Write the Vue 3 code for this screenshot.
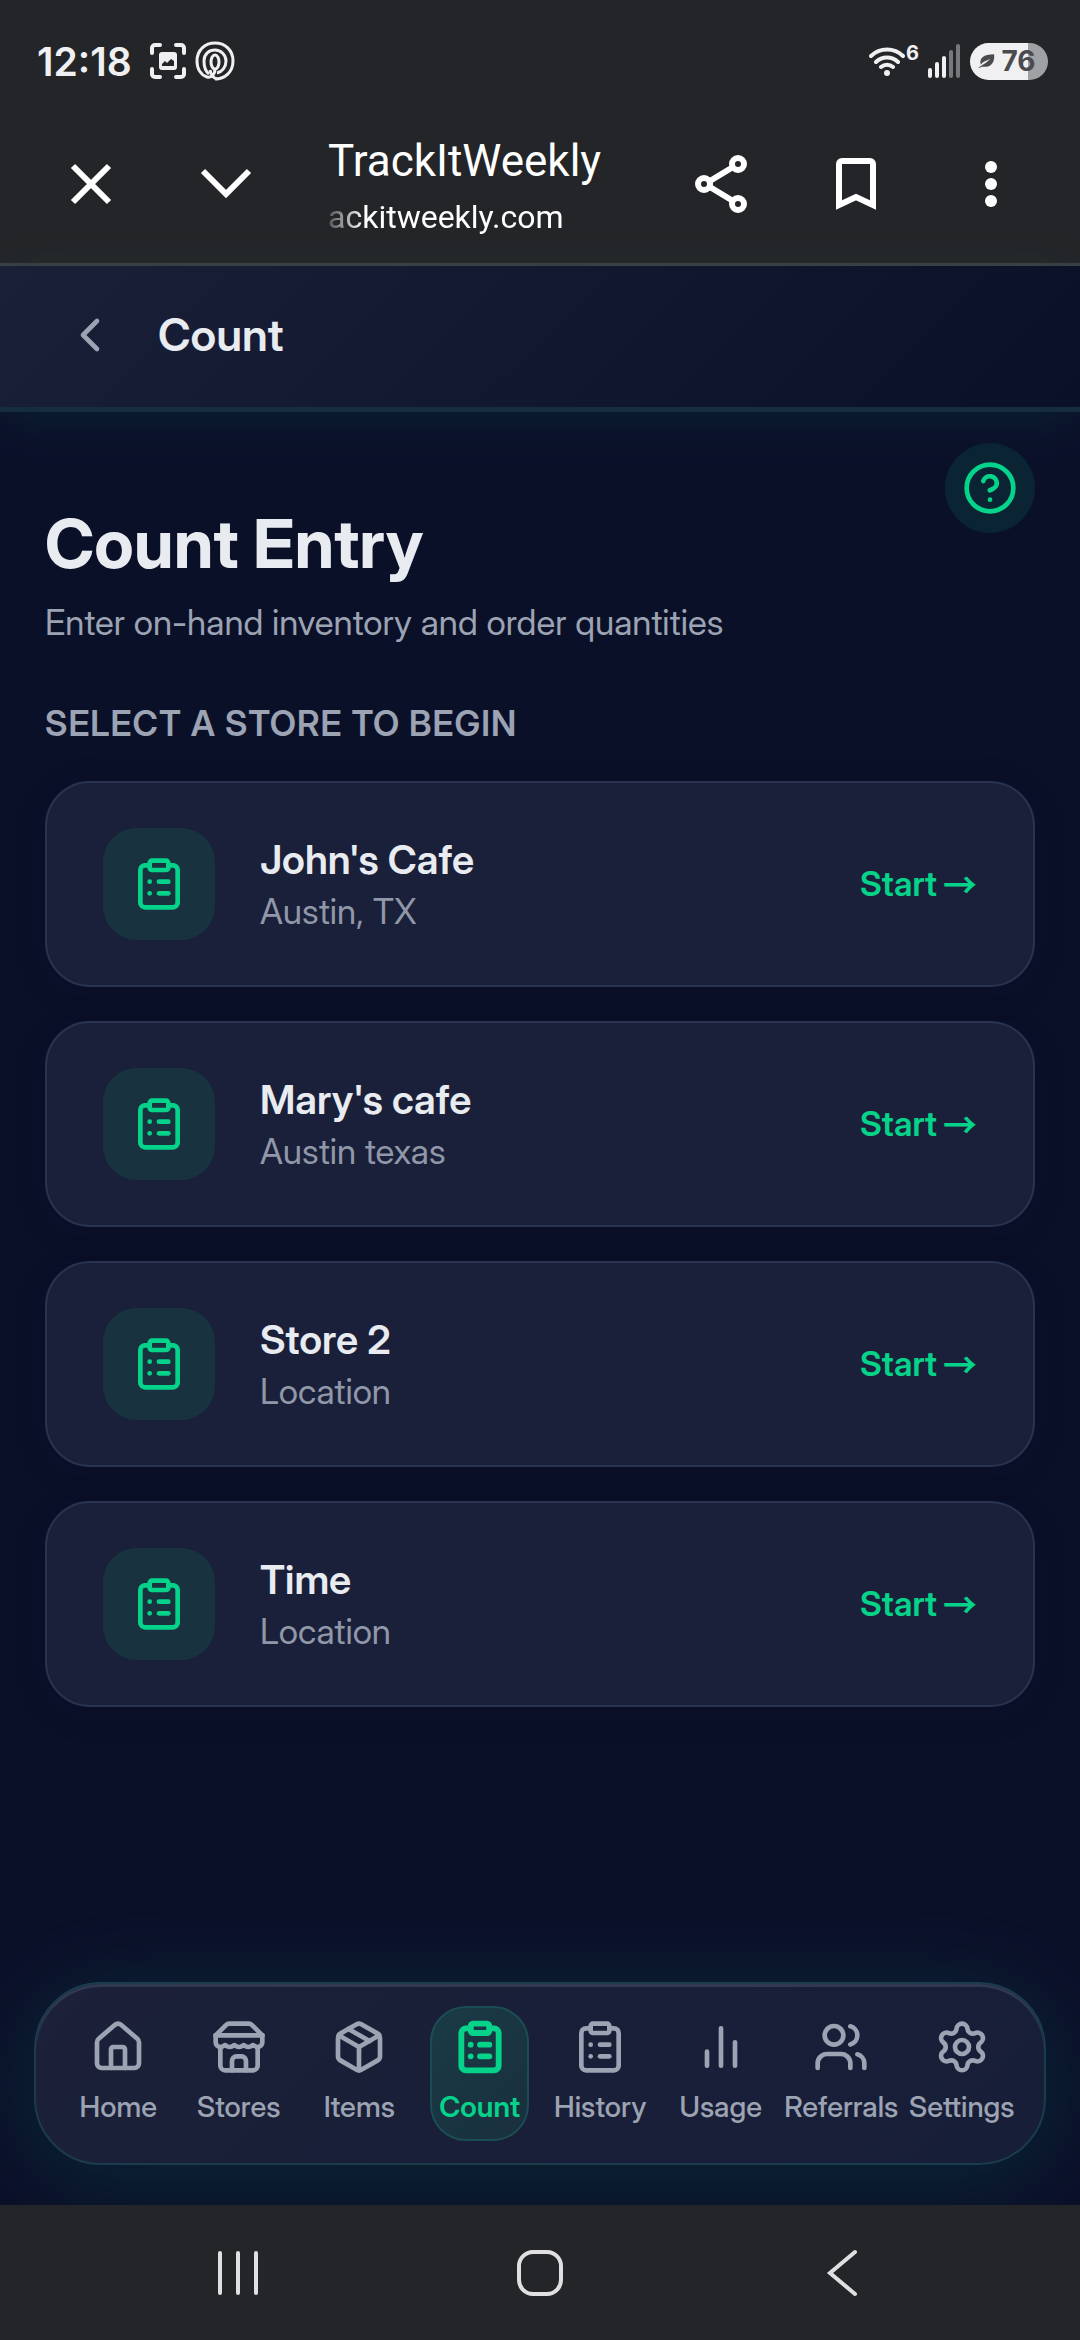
<script setup>
import { ref } from 'vue'

const stores = [
  { name: "John's Cafe", place: 'Austin, TX' },
  { name: "Mary's cafe", place: 'Austin texas' },
  { name: 'Store 2', place: 'Location' },
  { name: 'Time', place: 'Location' },
]

const clipboard = [
  'M9 2h6a1 1 0 0 1 1 1v2a1 1 0 0 1-1 1H9a1 1 0 0 1-1-1V3a1 1 0 0 1 1-1z',
  'M16 4h2a2 2 0 0 1 2 2v14a2 2 0 0 1-2 2H6a2 2 0 0 1-2-2V6a2 2 0 0 1 2-2h2',
  'M12 11h4',
  'M12 16h4',
  'M8 11h.01',
  'M8 16h.01',
]

const tabs = [
  {
    label: 'Home',
    paths: [
      'M15 21v-8a1 1 0 0 0-1-1h-4a1 1 0 0 0-1 1v8',
      'M3 10a2 2 0 0 1 .709-1.528l7-5.999a2 2 0 0 1 2.582 0l7 5.999A2 2 0 0 1 21 10v9a2 2 0 0 1-2 2H5a2 2 0 0 1-2-2z',
    ],
  },
  {
    label: 'Stores',
    paths: [
      'm2 7 4.41-4.41A2 2 0 0 1 7.83 2h8.34a2 2 0 0 1 1.42.59L22 7',
      'M4 12v8a2 2 0 0 0 2 2h12a2 2 0 0 0 2-2v-8',
      'M15 22v-4a2 2 0 0 0-2-2h-2a2 2 0 0 0-2 2v4',
      'M2 7h20',
      'M22 7v3a2 2 0 0 1-2 2a2.7 2.7 0 0 1-1.59-.63.7.7 0 0 0-.82 0A2.7 2.7 0 0 1 16 12a2.7 2.7 0 0 1-1.59-.63.7.7 0 0 0-.82 0A2.7 2.7 0 0 1 12 12a2.7 2.7 0 0 1-1.59-.63.7.7 0 0 0-.82 0A2.7 2.7 0 0 1 8 12a2.7 2.7 0 0 1-1.59-.63.7.7 0 0 0-.82 0A2.7 2.7 0 0 1 4 12a2 2 0 0 1-2-2V7',
    ],
  },
  {
    label: 'Items',
    paths: [
      'M11 21.73a2 2 0 0 0 2 0l7-4A2 2 0 0 0 21 16V8a2 2 0 0 0-1-1.73l-7-4a2 2 0 0 0-2 0l-7 4A2 2 0 0 0 3 8v8a2 2 0 0 0 1 1.73z',
      'M12 22V12',
      'm3.3 7 8.7 5 8.7-5',
      'm7.5 4.27 9 5.15',
    ],
  },
  { label: 'Count', paths: clipboard },
  { label: 'History', paths: clipboard },
  { label: 'Usage', paths: ['M18 20V10', 'M12 20V4', 'M6 20v-6'] },
  {
    label: 'Referrals',
    paths: [
      'M16 21v-2a4 4 0 0 0-4-4H6a4 4 0 0 0-4 4v2',
      'M13 7a4 4 0 1 1-8 0 4 4 0 0 1 8 0z',
      'M22 21v-2a4 4 0 0 0-3-3.87',
      'M16 3.13a4 4 0 0 1 0 7.75',
    ],
  },
  {
    label: 'Settings',
    paths: [
      'M9.671 4.136a2.34 2.34 0 0 1 4.659 0 2.34 2.34 0 0 0 3.319 1.915 2.34 2.34 0 0 1 2.33 4.033 2.34 2.34 0 0 0 0 3.831 2.34 2.34 0 0 1-2.33 4.033 2.34 2.34 0 0 0-3.319 1.915 2.34 2.34 0 0 1-4.659 0 2.34 2.34 0 0 0-3.32-1.915 2.34 2.34 0 0 1-2.33-4.033 2.34 2.34 0 0 0 0-3.831A2.34 2.34 0 0 1 6.35 6.051a2.34 2.34 0 0 0 3.319-1.915',
      'M15 12a3 3 0 1 1-6 0 3 3 0 0 1 6 0z',
    ],
  },
]

const active = ref('Count')
</script>

<template>
  <div class="screen">
    <div class="status">
      <div class="status-side">
        <time class="clock">12:18</time>
        <svg class="capture" viewBox="0 0 36 36" aria-hidden="true">
          <path class="line" d="M2 10V5a3 3 0 0 1 3-3h5M26 2h5a3 3 0 0 1 3 3v5M34 26v5a3 3 0 0 1-3 3h-5M10 34H5a3 3 0 0 1-3-3v-5" />
          <path class="solid" fill-rule="evenodd" d="M12 9h12a3 3 0 0 1 3 3v12a3 3 0 0 1-3 3H12a3 3 0 0 1-3-3V12a3 3 0 0 1 3-3zM12 23h12v-5l-3-2-4 4-2-2-3 3z" />
        </svg>
        <svg class="finger" viewBox="0 0 40 40" aria-hidden="true">
          <path d="M20 38c10 0 18-7 18-18S30 2 20 2 2 9 2 20c0 8 4 14 10 16 5 1 8-3 8-8" />
          <path d="M14 33c-4-3-5-8-5-13C9 13 14 9 20 9s11 5 11 11-4 11-9 12" />
          <ellipse cx="20" cy="21" rx="4" ry="7" />
          <path d="M15 29c1 5 3 8 7 9" />
        </svg>
      </div>
      <div class="status-side">
        <svg class="wifi" viewBox="0 0 36 32" aria-hidden="true">
          <path d="M2 11a23 23 0 0 1 32 0M7 17a16 16 0 0 1 22 0M12 22a9 9 0 0 1 12 0" />
          <circle cx="18" cy="28" r="3" />
        </svg>
        <span class="wifi-gen">6</span>
        <svg class="signal" viewBox="0 0 34 34" aria-hidden="true">
          <path d="M3 26v6M10 20v12M17 14v18" />
          <path class="dim" d="M24 8v24M31 2v30" />
        </svg>
        <div class="battery">
          <svg viewBox="0 0 20 16" aria-hidden="true">
            <path d="M1 15c3-1 4-3 8-5l5-4C9 8 6 9 4 12 2 5 7 1 18 1c1 8-3 14-10 13H5c-1 1-2 1-4 1z" />
          </svg>
          <span>76</span>
        </div>
      </div>
    </div>

    <div class="toolbar">
      <button class="tool" type="button" aria-label="Close">
        <svg viewBox="0 0 68 68"><path d="M16 16l36 36M52 16L16 52" /></svg>
      </button>
      <button class="tool" type="button" aria-label="Minimise">
        <svg viewBox="0 0 68 68"><path d="M11 21l23 23 23-23" /></svg>
      </button>
      <div class="site">
        <span class="site-name">TrackItWeekly</span>
        <span class="site-url">ackitweekly.com</span>
      </div>
      <button class="tool" type="button" aria-label="Share">
        <svg viewBox="0 0 68 68">
          <path d="M18 34l33-20M18 34l33 20" />
          <circle class="knot" cx="17" cy="34" r="6" />
          <circle class="knot" cx="51" cy="14" r="6" />
          <circle class="knot" cx="51" cy="54" r="6" />
        </svg>
      </button>
      <button class="tool" type="button" aria-label="Bookmark">
        <svg viewBox="0 0 68 68"><path d="M17 55V14a3 3 0 0 1 3-3h28a3 3 0 0 1 3 3v41l-17-8z" /></svg>
      </button>
      <button class="tool" type="button" aria-label="More">
        <svg viewBox="0 0 68 68">
          <circle class="dot" cx="34" cy="17" r="6" />
          <circle class="dot" cx="34" cy="34" r="6" />
          <circle class="dot" cx="34" cy="51" r="6" />
        </svg>
      </button>
    </div>

    <header class="head">
      <button class="back" type="button" aria-label="Back">
        <svg class="icon" viewBox="0 0 24 24"><path d="m15 18-6-6 6-6" /></svg>
      </button>
      <span class="head-title">Count</span>
    </header>

    <main class="main">
      <div class="hero">
        <div class="hero-text">
          <h1>Count Entry</h1>
          <p>Enter on-hand inventory and order quantities</p>
        </div>
        <button class="help" type="button" aria-label="Help">
          <svg class="icon" viewBox="0 0 24 24">
            <circle cx="12" cy="12" r="10" />
            <path d="M9.09 9a3 3 0 0 1 5.83 1c0 2-3 3-3 3M12 17h.01" />
          </svg>
        </button>
      </div>

      <h2>Select a store to begin</h2>
      <div class="stores">
        <button v-for="store in stores" :key="store.name" class="card" type="button">
          <span class="tile">
            <svg class="icon" viewBox="0 0 24 24" aria-hidden="true">
              <path v-for="d in clipboard" :key="d" :d="d" />
            </svg>
          </span>
          <span class="info">
            <span class="name">{{ store.name }}</span>
            <span class="place">{{ store.place }}</span>
          </span>
          <span class="start">Start <span class="arrow">→</span></span>
        </button>
      </div>
    </main>

    <nav class="tabs">
      <a
        v-for="tab in tabs"
        :key="tab.label"
        class="tab"
        :class="{ active: tab.label === active }"
        href="#"
        @click.prevent="active = tab.label"
      >
        <span class="pill">
          <svg class="icon" viewBox="0 0 24 24" aria-hidden="true">
            <path v-for="d in tab.paths" :key="d" :d="d" />
          </svg>
          <span class="tab-label">{{ tab.label }}</span>
        </span>
      </a>
    </nav>

    <div class="system">
      <button type="button" aria-label="Recent apps">
        <svg viewBox="0 0 48 48"><path d="M6 4v40M24 4v40M42 4v40" /></svg>
      </button>
      <button type="button" aria-label="Home screen">
        <svg viewBox="0 0 48 48"><rect x="3" y="3" width="42" height="42" rx="14" /></svg>
      </button>
      <button type="button" aria-label="Go back">
        <svg viewBox="0 0 48 48"><path d="M37 3L12 24l25 21" /></svg>
      </button>
    </div>
  </div>
</template>

<style>
body {
  margin: 0;
  background: #0b1029;
}
</style>

<style scoped>
.screen {
  display: flex;
  flex-direction: column;
  min-height: 100vh;
  background: #0b1029;
  color: #e8ebf0;
  font-family: "Inter Display", Inter, "Noto Sans", sans-serif;
}

button {
  margin: 0;
  padding: 0;
  border: 0;
  background: none;
  color: inherit;
  font: inherit;
  text-align: left;
}

svg {
  display: block;
  flex: none;
  fill: none;
  stroke: currentColor;
}

.icon {
  width: 56px;
  height: 56px;
  stroke-width: 2;
  stroke-linecap: round;
  stroke-linejoin: round;
}

/* Device status bar */
.status {
  display: flex;
  justify-content: space-between;
  align-items: center;
  height: 88px;
  padding: 17px 32px 0 37px;
  background: #242528;
  color: #f0f0f2;
  font-family: Inter, sans-serif;
}

.status-side {
  display: flex;
  align-items: center;
}

.clock {
  margin-right: 18px;
  font-size: 39px;
  font-weight: 600;
}

.capture {
  width: 36px;
  height: 36px;
  margin-right: 9px;
  stroke-width: 4;
  stroke-linecap: round;
}

.capture .solid {
  fill: currentColor;
  stroke: none;
}

.finger {
  width: 40px;
  height: 40px;
  stroke-width: 3;
}

.wifi {
  width: 36px;
  height: 32px;
  stroke-width: 4;
  stroke-linecap: round;
}

.wifi circle {
  fill: currentColor;
  stroke: none;
}

.wifi-gen {
  align-self: flex-start;
  margin: 0 8px 0 1px;
  font-size: 20px;
  font-weight: 700;
  line-height: 20px;
}

.signal {
  width: 34px;
  height: 34px;
  margin-right: 9px;
  stroke-width: 4;
  stroke-linecap: round;
}

.signal .dim {
  stroke: #77787b;
}

.battery {
  display: flex;
  align-items: center;
  justify-content: center;
  gap: 5px;
  box-sizing: border-box;
  width: 78px;
  height: 37px;
  padding-right: 5px;
  border-radius: 19px;
  background: linear-gradient(90deg, #f0f0f2 75%, #a0a1a4 75%);
  color: #4a4b4e;
  font-size: 28px;
  font-weight: 700;
}

.battery svg {
  width: 19px;
  height: 16px;
  fill: currentColor;
  stroke: none;
}

/* In-app browser toolbar */
.toolbar {
  display: flex;
  align-items: center;
  height: 158px;
  padding: 0 22px 0 23px;
  border-bottom: 3px solid #3a3d42;
  background: #242528;
  color: #fff;
}

.tool {
  display: flex;
  flex: none;
  align-items: center;
  justify-content: center;
  width: 135px;
  height: 135px;
}

.tool svg {
  width: 68px;
  height: 68px;
  stroke-width: 6;
}

.tool .dot {
  fill: currentColor;
  stroke: none;
}

.tool .knot {
  fill: #242528;
}

.site {
  display: flex;
  flex: 1;
  flex-direction: column;
  min-width: 0;
  padding: 5px 0 0 35px;
  font-family: Roboto, sans-serif;
  white-space: nowrap;
}

.site-name {
  font-size: 44px;
  line-height: 60px;
}

.site-url {
  font-size: 32px;
  line-height: 52px;
  -webkit-mask-image: linear-gradient(90deg, transparent -10px, #000 36px);
  mask-image: linear-gradient(90deg, transparent -10px, #000 36px);
}

/* Page header */
.head {
  display: flex;
  align-items: center;
  gap: 23px;
  padding: 24px 45px 27px;
  border-bottom: 5px solid #152d3e;
  background: linear-gradient(135deg, #1a2038, #0b1029);
  box-shadow: 0 11px 56px rgba(0, 214, 143, 0.08);
}

.back {
  display: flex;
  align-items: center;
  justify-content: center;
  width: 90px;
  height: 90px;
  color: #9ca3b3;
}

.head-title {
  font-size: 45px;
  font-weight: 600;
  line-height: 56px;
}

/* Content */
.main {
  flex: 1;
  padding: 31px 45px 45px;
}

.hero {
  display: flex;
  align-items: flex-start;
  justify-content: space-between;
}

.hero-text {
  padding-top: 60px;
}

h1 {
  margin: 0 0 14px;
  font-size: 68px;
  font-weight: 700;
  line-height: 80px;
}

p {
  margin: 0;
  color: #9ca3b3;
  font-size: 35px;
  line-height: 51px;
}

.help {
  display: flex;
  align-items: center;
  justify-content: center;
  width: 90px;
  height: 90px;
  border-radius: 50%;
  background: #0a2433;
  color: #06d38a;
}

h2 {
  margin: 50px 0 32px;
  color: #9ca3b3;
  font-size: 35px;
  font-weight: 600;
  letter-spacing: 1px;
  line-height: 51px;
  text-transform: uppercase;
}

.stores {
  display: flex;
  flex-direction: column;
  gap: 34px;
}

.card {
  display: flex;
  align-items: center;
  gap: 45px;
  padding: 45px 56px;
  border: 2px solid #293350;
  border-radius: 45px;
  background: #1a2039;
  box-shadow: 0 6px 34px rgba(0, 20, 30, 0.15);
}

.tile {
  display: flex;
  align-items: center;
  justify-content: center;
  width: 112px;
  height: 112px;
  border-radius: 34px;
  background: #18333f;
  color: #06d38a;
}

.info {
  display: flex;
  flex: 1;
  flex-direction: column;
}

.name {
  font-size: 40px;
  font-weight: 600;
  line-height: 54px;
}

.place {
  color: #9097a8;
  font-size: 35px;
  line-height: 48px;
}

.start {
  display: flex;
  align-items: center;
  gap: 6px;
  color: #06d38a;
  font-size: 34px;
  font-weight: 600;
  line-height: 48px;
}

.arrow {
  font-family: "Noto Sans CJK SC", sans-serif;
}

/* Bottom tabs */
.tabs {
  display: flex;
  margin: 0 34px 40px;
  padding: 22px;
  border: 2px solid #1b3c4c;
  border-radius: 67px;
  background: linear-gradient(135deg, #1c2039, #171e37);
  box-shadow: inset 0 3px 0 #313950, 0 11px 90px rgba(0, 214, 143, 0.13);
}

.tab {
  display: flex;
  flex: 1;
  justify-content: center;
  min-width: 0;
  color: #9ca3b3;
  text-decoration: none;
}

.pill {
  display: flex;
  flex-direction: column;
  align-items: center;
  gap: 11px;
  padding: 11px 7px;
  border: 2px solid transparent;
  border-radius: 36px;
}

.tab-label {
  font-size: 29px;
  font-weight: 500;
  line-height: 42px;
}

.active {
  color: #06d38a;
}

.active .pill {
  border-color: #1a4d54;
  background: linear-gradient(135deg, #193b45, #1a2f3e);
}

.active .icon {
  stroke-width: 2.5;
}

.active .tab-label {
  font-weight: 600;
}

/* Device navigation */
.system {
  display: flex;
  position: relative;
  justify-content: center;
  height: 135px;
  background: #242528;
  color: #e0e0e2;
}

.system button {
  display: flex;
  align-items: center;
  justify-content: center;
  width: 28%;
}

.system svg {
  width: 48px;
  height: 48px;
  stroke-width: 4;
  stroke-linecap: round;
}
</style>
